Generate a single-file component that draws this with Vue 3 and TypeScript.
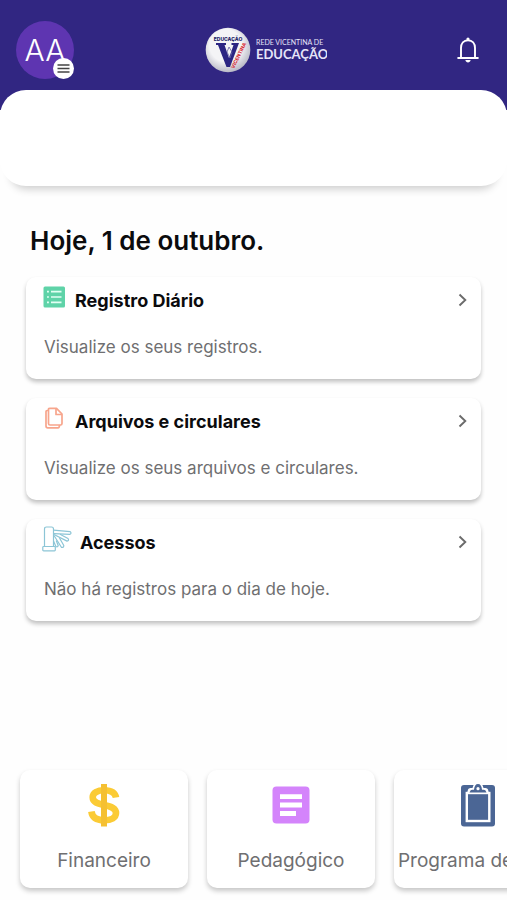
<script setup lang="ts">
interface DayItem {
  id: 'diary' | 'files' | 'access'
  title: string
  text: string
}

interface Shortcut {
  id: 'finance' | 'pedagogy' | 'program'
  label: string
}

const today = 'Hoje, 1 de outubro.'

const items: DayItem[] = [
  { id: 'diary', title: 'Registro Diário', text: 'Visualize os seus registros.' },
  { id: 'files', title: 'Arquivos e circulares', text: 'Visualize os seus arquivos e circulares.' },
  { id: 'access', title: 'Acessos', text: 'Não há registros para o dia de hoje.' },
]

const shortcuts: Shortcut[] = [
  { id: 'finance', label: 'Financeiro' },
  { id: 'pedagogy', label: 'Pedagógico' },
  { id: 'program', label: 'Programa de Aula' },
]
</script>

<template>
  <div class="page">
    <header class="header">
      <button class="avatar" type="button" aria-label="Menu do perfil">
        <span class="initials">AA</span>
        <span class="badge">
          <svg width="13" height="9" viewBox="0 0 13 9" aria-hidden="true">
            <path d="M0.5 1H12.5M0.5 4.5H12.5M0.5 8H12.5" stroke="#444" stroke-width="1.3" />
          </svg>
        </span>
      </button>

      <svg class="logo" width="122" height="46" viewBox="0 0 122 46" role="img" aria-label="Rede Vicentina de Educação">
        <defs>
          <radialGradient id="disc" cx="0.45" cy="0.4" r="0.6">
            <stop offset="0.6" stop-color="#f4f4f6" />
            <stop offset="1" stop-color="#b9b9c6" />
          </radialGradient>
        </defs>
        <circle cx="23" cy="23" r="22.3" fill="url(#disc)" />
        <path d="M11 16H21V18H19.500L24 31L28.500 18H26.500V16H34L25 40H21.500L13 18H11Z" fill="#2b2482" />
        <path d="M24 20L27 25L25 31L22 25Z" fill="none" stroke="#6a65a5" stroke-width="0.8" />
        <text class="seal" x="23" y="14" text-anchor="middle" fill="#221d66">EDUCAÇÃO</text>
        <text class="seal" x="29" y="42" transform="rotate(-64 29 42)" fill="#d8323c">VICENTINA</text>
        <text class="brand-top" x="51" y="18">REDE VICENTINA DE</text>
        <text class="brand-main" x="51" y="32">EDUCAÇÃO</text>
      </svg>

      <button class="bell" type="button" aria-label="Notificações">
        <svg width="22" height="26" viewBox="0 0 22 26" fill="none" aria-hidden="true">
          <path d="M4 20.500V11C4 6.500 6.700 3.200 11 3.200S18 6.500 18 11V20.500" stroke="#fff" stroke-width="1.9" />
          <path d="M1.200 21H20.800" stroke="#fff" stroke-width="2" stroke-linecap="round" />
          <circle cx="11" cy="2.100" r="1.600" fill="#fff" />
          <path d="M8.400 23H13.600C13.300 26.200 8.700 26.200 8.400 23Z" fill="#fff" />
        </svg>
      </button>
    </header>

    <section class="panel" aria-label="Destaques"></section>

    <main class="content">
      <h1 class="today">{{ today }}</h1>
      <a v-for="item in items" :key="item.id" class="card" href="#">
        <span class="card-head">
          <svg v-if="item.id === 'diary'" class="card-icon" width="22" height="22" viewBox="0 0 22 22" aria-hidden="true">
            <rect x="-0.500" y="0.500" width="21.500" height="21" rx="1.500" fill="#5fd3a8" />
            <path d="M7 5.700H17.500M7 11H17.500M7 16.300H17.500M3 5.700H4.900M3 11H4.900M3 16.300H4.900" stroke="#e2fff3" stroke-width="1.700" />
          </svg>
          <svg v-else-if="item.id === 'files'" class="card-icon" width="22" height="22" viewBox="0 0 22 22" fill="none" stroke="#f7a58c" stroke-width="1.700" stroke-linejoin="round" aria-hidden="true">
            <path d="M6 1.300H12.500L18 7V16.500Q18 18 16.500 18H6Q4.500 18 4.500 16.500V2.300Q4.500 1.300 6 1.300Z" />
            <path d="M12 1.500V7.500H18" />
            <path d="M4.500 3.500H3.200Q2 3.500 2 4.700V19Q2 20.800 3.800 20.800H14Q15.500 20.800 15.500 18" />
          </svg>
          <svg v-else class="card-icon" width="27" height="26" viewBox="2 0 27 26" fill="none" stroke="#8cc5d6" stroke-width="1.200" stroke-linejoin="round" aria-hidden="true">
            <path d="M2.500 20.500V3Q2.500 1 4.500 1H9.500Q11.500 1 11.500 3V20.500" />
            <rect x="0.800" y="20.500" width="12.500" height="4.300" rx="0.800" />
            <path d="M11.500 4.200L28 5.600Q30 7 28 8.300L12 7.700" />
            <path d="M18 8.300L26 12.500Q27.500 14.700 25 15.100L12 8.500" />
            <path d="M17.500 12L21.800 19.500Q21.800 22 19.400 21.300L12 9.500" />
            <path d="M14.200 14.500L16.200 19.500Q15.700 21.500 13.900 20.500L11.500 15" />
          </svg>
          <strong class="card-title">{{ item.title }}</strong>
          <svg class="chevron" width="9" height="14" viewBox="0 0 9 14" fill="none" aria-hidden="true">
            <path d="M1.500 1.500L7.300 7L1.500 12.500" stroke="#6b6b6b" stroke-width="1.900" />
          </svg>
        </span>
        <span class="card-text">{{ item.text }}</span>
      </a>
    </main>

    <nav class="shortcuts" aria-label="Atalhos">
      <a v-for="s in shortcuts" :key="s.id" class="shortcut" href="#">
        <svg v-if="s.id === 'finance'" width="44" height="44" viewBox="0 0 44 44" fill="none" aria-hidden="true">
          <path d="M34 14.500C33.200 9.800 29 7.200 22.200 7.200C15.500 7.200 10.700 9.800 10.700 14.300C10.700 19 15 20.500 22 22C29.500 23.600 34 25.200 34 30C34 34.600 29.300 37.200 22.300 37.200C15 37.200 10.200 34.500 9.400 28.500" stroke="#fbcb35" stroke-width="6.600" />
          <path d="M22 1V43.500" stroke="#f5c032" stroke-width="6" />
        </svg>
        <svg v-else-if="s.id === 'pedagogy'" width="44" height="44" viewBox="0 0 44 44" aria-hidden="true">
          <rect x="3.500" y="3.500" width="37" height="37" rx="4" fill="#d484fb" />
          <path d="M11 13.700H33M11 22H33M11 30.500H27" stroke="#fff" stroke-width="4.800" />
        </svg>
        <svg v-else width="44" height="44" viewBox="0 0 44 44" aria-hidden="true">
          <rect x="5" y="2" width="34" height="41.500" rx="3" fill="#4b6695" />
          <rect x="10.800" y="10" width="22.500" height="28" fill="#4b6695" stroke="#fff" stroke-width="2.400" />
          <path d="M11 10.500L12 6.500Q12.500 5 14.500 5H16.500Q17.500 0 22 0T27.500 5H29.500Q31.500 5 32 6.500L33 10.500Z" fill="#fff" />
          <path d="M13.500 9.500L14.500 7.500Q15 6.800 16.500 6.800H18Q18.500 1 22 1T26 6.800H27.500Q29 6.800 29.500 7.500L30.500 9.500Z" fill="#4b6695" />
          <circle cx="22" cy="5.700" r="1.600" fill="#fff" />
        </svg>
        <span class="shortcut-label">{{ s.label }}</span>
      </a>
    </nav>
  </div>
</template>

<style>
body {
  background: #fefefe;
}
</style>

<style scoped>
.page {
  display: flex;
  flex-direction: column;
  min-height: 100vh;
  overflow: hidden;
  font-family: Inter, "Liberation Sans", sans-serif;
  color: #0b0b0d;
}

.header {
  display: flex;
  align-items: center;
  justify-content: space-between;
  height: 110px;
  padding: 0 28px 10px 16px;
  box-sizing: border-box;
  background: #312682;
}

button {
  padding: 0;
  border: 0;
  background: none;
  font: inherit;
  cursor: pointer;
}

.avatar {
  position: relative;
  width: 58px;
  height: 58px;
  border-radius: 50%;
  background: #5e35b1;
  color: #fff;
}

.initials {
  font-size: 30px;
  font-weight: 300;
}

.badge {
  position: absolute;
  right: 0;
  bottom: 0;
  display: flex;
  align-items: center;
  justify-content: center;
  width: 21px;
  height: 21px;
  border-radius: 50%;
  background: #fff;
}

.seal {
  font: 800 5px Inter, sans-serif;
}

.brand-top {
  font: 400 7px Lato, sans-serif;
  fill: #e6e4f8;
}

.brand-main {
  font: 700 13px Lato, sans-serif;
  fill: #e6e4f8;
}

.bell {
  display: flex;
}

.panel {
  height: 96px;
  margin-top: -20px;
  border-radius: 26px;
  background: #fff;
  box-shadow: 0 14px 9px -11px rgba(0, 0, 0, 0.2);
}

.content {
  display: flex;
  flex-direction: column;
  gap: 19px;
  padding: 38px 26px 24px;
}

.today {
  margin: 0 4px;
  font-size: 26px;
  line-height: 34px;
  font-weight: 600;
}

.card {
  display: flex;
  flex-direction: column;
  gap: 20px;
  height: 102px;
  padding: 8px 14px 0 18px;
  box-sizing: border-box;
  border-radius: 10px;
  background: #fff;
  box-shadow: 0 3px 4px rgba(0, 0, 0, 0.24);
  color: inherit;
  text-decoration: none;
}

.card-head {
  display: flex;
  align-items: center;
  gap: 9px;
  height: 30px;
}

.card-icon {
  margin-bottom: 6px;
  overflow: visible;
}

.card-title {
  font-size: 18px;
  font-weight: 700;
}

.chevron {
  margin-left: auto;
}

.card-text {
  font-size: 17px;
  line-height: 24px;
  color: #6f6f71;
}

.shortcuts {
  display: flex;
  gap: 19px;
  margin-top: auto;
  padding: 4px 20px 12px;
  overflow-x: auto;
  scrollbar-width: none;
}

.shortcut {
  display: flex;
  flex: 0 0 168px;
  flex-direction: column;
  align-items: center;
  gap: 21px;
  height: 118px;
  padding-top: 13px;
  box-sizing: border-box;
  border-radius: 10px;
  background: #fff;
  box-shadow: 0 3px 5px rgba(0, 0, 0, 0.22);
  color: #6f6f71;
  text-decoration: none;
  white-space: nowrap;
}

.shortcut-label {
  font-size: 19px;
  line-height: 26px;
}
</style>
